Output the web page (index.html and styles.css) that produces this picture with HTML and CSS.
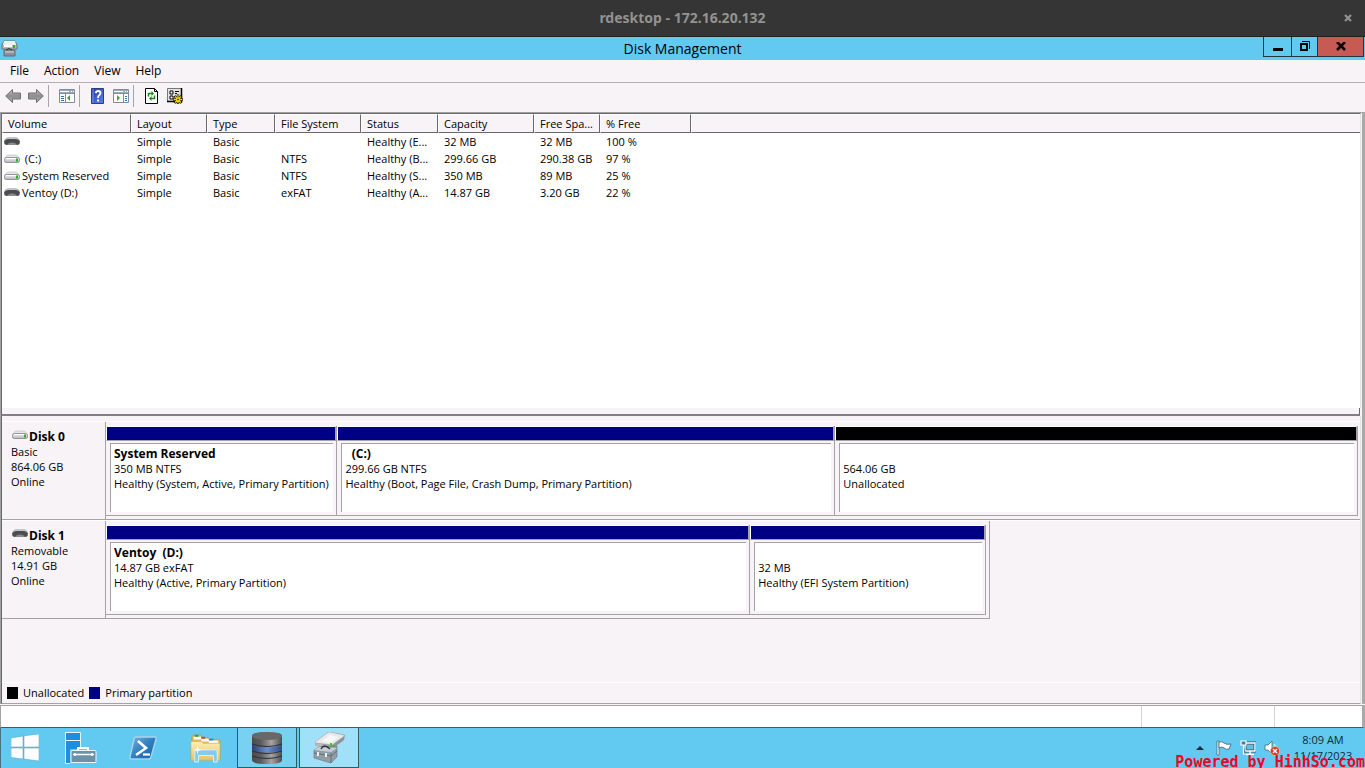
FILE: index.html
```html
<!DOCTYPE html>
<html lang="en">
<head>
<meta charset="utf-8">
<title>Disk Management</title>
<link rel="stylesheet" href="styles.css">
</head>
<body>
<svg class="defs" width="0" height="0" aria-hidden="true">
  <defs>
    <linearGradient id="metal" x1="0" y1="0" x2="0" y2="1"><stop offset="0" stop-color="#f4f4f6"/><stop offset="1" stop-color="#b4b4ba"/></linearGradient>
    <linearGradient id="arrow" x1="0" y1="0" x2="0" y2="1"><stop offset="0" stop-color="#c4c4c4"/><stop offset=".5" stop-color="#8c8c8c"/><stop offset="1" stop-color="#b4b4b4"/></linearGradient>
    <linearGradient id="psblue" x1="0" y1="0" x2="1" y2="1"><stop offset="0" stop-color="#7db4dc"/><stop offset=".5" stop-color="#2f7fbf"/><stop offset="1" stop-color="#1560a8"/></linearGradient>
    <linearGradient id="helpblue" x1="0" y1="0" x2="1" y2="1"><stop offset="0" stop-color="#2438a8"/><stop offset="1" stop-color="#5c86e8"/></linearGradient>
    <linearGradient id="folder" x1="0" y1="0" x2="0" y2="1"><stop offset="0" stop-color="#fdf0b4"/><stop offset="1" stop-color="#e9c368"/></linearGradient>
    <linearGradient id="cyl" x1="0" y1="0" x2="1" y2="0"><stop offset="0" stop-color="#4a4a4c"/><stop offset=".3" stop-color="#5c5c5f"/><stop offset=".65" stop-color="#a6a49f"/><stop offset="1" stop-color="#4c4c50"/></linearGradient>
    <linearGradient id="cylblue" x1="0" y1="0" x2="1" y2="0"><stop offset="0" stop-color="#26406e"/><stop offset=".5" stop-color="#6a8fd0"/><stop offset="1" stop-color="#2d4c86"/></linearGradient>
    <symbol id="hdd" viewBox="0 0 16 10">
      <path d="M3.500 1h9L15 4H1z" fill="#e6e6ea" stroke="#c6c6cc" stroke-width=".8"/>
      <rect x=".5" y="3.500" width="15" height="5" rx="1.800" fill="url(#metal)" stroke="#8c8c93" stroke-width=".9"/>
      <path d="M2 4.500h11" stroke="#fff"/>
      <rect x="12" y="4.500" width="2" height="3" fill="#25b025"/>
    </symbol>
    <symbol id="removable" viewBox="0 0 16 10">
      <path d="M0 4Q1 0 5 0h6q4 0 5 4z" fill="#c4c4c8"/>
      <path d="M0 4.500Q1 2 4 2h8q3 0 4 2.500L15.500 7q-1 1-2.500 1H3Q1.500 8 .5 7z" fill="#4b4d51"/>
      <path d="M3 8q1-2.500 5-2.500T13 8z" fill="#888b90"/>
    </symbol>
    <symbol id="diskmgr" viewBox="0 0 32 32">
      <path d="M2 11 14 1q1-1 3-1l15 3-1 5-12 9L2 13z" fill="#8f9296"/>
      <path d="M2 10 14 1q1-1 3-1l14 3q1 1-1 2L19 13 3 11z" fill="#e9e9eb" stroke="#a5a7aa" stroke-width=".6"/>
      <path d="m9 9 8-6 8 2-7 6z" fill="#f8f8f9"/>
      <path d="m2 11 17 3v4L3 14z" fill="#b7b9bd"/>
      <rect x="17" y="11" width="2" height="4" fill="#28d817"/>
      <path d="m1 18 5-3 18-1v11l-6 6L1 26z" fill="#929ea6" stroke="#68747c" stroke-width=".6"/>
      <path d="m1 18 5-3 18 1-6 4z" fill="#c4ced4"/>
      <path d="m1 21 17 3 6-5M18 21v10" fill="none" stroke="#65717a"/>
      <path d="M8 17q3-6 9 0" fill="none" stroke="#30363a" stroke-width="1.300"/>
      <path d="M5 20v4m8-3v4" stroke="#ecf1f4" stroke-width="2"/>
    </symbol>
  </defs>
</svg>

<header class="remote-bar">
  <span class="remote-title">rdesktop - 172.16.20.132</span>
  <button class="remote-close" aria-label="Close session"><svg width="8" height="8" viewBox="0 0 8 8"><path d="m1 1 6 6M7 1 1 7" stroke="#929292" stroke-width="2.200"/></svg></button>
</header>

<div class="title-bar">
  <svg class="title-icon" width="17" height="17" viewBox="0 0 17 17">
    <path d="M3 1h11l2 4v4H1V5z" fill="#b9babd" stroke="#707275"/><path d="M3 1h11l1 4H2z" fill="#eee"/><path d="M3 6h8" stroke="#fff" stroke-width="2"/><rect x="12" y="5" width="2" height="3" fill="#2ab41f"/>
    <path d="M3 10h11v6H3z" fill="#8b9297" stroke="#646c71"/><path d="M5 10q3-3 6 0" fill="none" stroke="#333"/><path d="M4 12h9" stroke="#d6dce0"/>
  </svg>
  <h1 class="title-text">Disk Management</h1>
  <div class="window-buttons">
    <button class="win-btn win-min" aria-label="Minimize"><svg width="10" height="10" viewBox="0 0 10 10"><path d="M0 7.500h10" stroke="#000" stroke-width="3"/></svg></button>
    <button class="win-btn win-restore" aria-label="Restore"><svg width="10" height="12" viewBox="0 0 10 12"><path d="M1 3h6v6H1z" fill="none" stroke="#000" stroke-width="2"/><path d="M2 .5h7.500V8" fill="none" stroke="#000"/></svg></button>
    <button class="win-btn win-close" aria-label="Close"><svg width="10" height="10" viewBox="0 0 10 10"><path d="M1 0 9 8M9 0 1 8" stroke="#000" stroke-width="2.600"/></svg></button>
  </div>
</div>

<nav class="menu-bar">
  <button class="menu-item">File</button><button class="menu-item">Action</button><button class="menu-item">View</button><button class="menu-item">Help</button>
</nav>

<div class="tool-bar">
  <button class="tool" aria-label="Back"><svg width="16" height="16" viewBox="0 0 16 16"><path d="M.7 8 7.500 1.500V5h8v6h-8v3.500z" fill="url(#arrow)" stroke="#6f6f6f"/></svg></button>
  <button class="tool" aria-label="Forward"><svg width="16" height="16" viewBox="0 0 16 16"><path d="M15.300 8 8.500 1.500V5h-8v6h8v3.500z" fill="url(#arrow)" stroke="#6f6f6f"/></svg></button>
  <span class="tool-sep"></span>
  <button class="tool" aria-label="Show console tree"><svg width="16" height="14" viewBox="0 0 16 14"><path d="M.5.5h15v13H.5z" fill="#fff" stroke="#7f8c9b"/><path d="M1 1h14v3H1z" fill="#9eabba"/><path d="M1 2.500h9M12 2.500h1m1 0h1" stroke="#fff"/><path d="M1 4.500h14M6.500 5v9" stroke="#7f8c9b"/><path d="M2 7.500h3m-3 2h3m-3 2h3" stroke="#3d6fb4"/><path d="M11 6v6L8 9z" fill="#3ba52f"/></svg></button>
  <span class="tool-sep"></span>
  <button class="tool" aria-label="Help"><svg width="14" height="16" viewBox="0 0 14 16"><path d="M.5.5h12v15H.5z" fill="url(#helpblue)" stroke="#2c3d86"/><path d="M2 1v14" stroke="#7e95da"/><path d="M4.800 5.200Q5 3 7.200 3t2.300 2q0 1.300-1.300 2.200T7 10" fill="none" stroke="#fff" stroke-width="1.800"/><rect x="6" y="11.500" width="2" height="2" fill="#fff"/></svg></button>
  <button class="tool" aria-label="Show action pane"><svg width="16" height="14" viewBox="0 0 16 14"><path d="M.5.5h15v13H.5z" fill="#fff" stroke="#7f8c9b"/><path d="M1 1h14v3H1z" fill="#9eabba"/><path d="M1 2.500h9M12 2.500h1m1 0h1" stroke="#fff"/><path d="M1 4.500h14M10.500 5v9" stroke="#7f8c9b"/><path d="M12 7.500h2m-2 2h2m-2 2h2" stroke="#3d6fb4"/><path d="M4 6v6l3-3z" fill="#3ba52f"/></svg></button>
  <span class="tool-sep"></span>
  <button class="tool" aria-label="Refresh"><svg width="14" height="16" viewBox="0 0 14 16"><path d="M.5.5h9l3 3v12H.5z" fill="#fff" stroke="#000"/><path d="M9.500.5v3h3" fill="none" stroke="#000"/><path d="M3.500 8.500V5.500H7M9.500 7.500v3H6" fill="none" stroke="#158c15" stroke-width="1.500"/><path d="M6.500 3v5l2.500-2.500zM6.500 8v5L4 10.500z" fill="#158c15"/></svg></button>
  <button class="tool" aria-label="Settings"><svg width="16" height="16" viewBox="0 0 16 16"><path d="M.5.500h14v13H.5z" fill="#e2e2e2" stroke="#777"/><path d="M14.500 0v13.500H0" fill="none" stroke="#000" stroke-width="1.500"/><path d="M3 3h3v3H3zm0 5h3v3H3z" fill="#fff" stroke="#000"/><path d="M8 3.500h4M8 5.500h2" stroke="#000"/><g stroke="#000" stroke-width="2.400"><path d="M11 6.500V16M6 11.500h10M7.500 8l7 7m0-7-7 7"/></g><g stroke="#f3d600" stroke-width="1.300"><path d="M11 7v8.500M6.500 11.500h9M8 8.500l6 6m0-6-6 6"/></g><circle cx="11" cy="11.500" r="2" fill="#f3d600"/><circle cx="11" cy="11.500" r=".8" fill="#000"/></svg></button>
</div>

<main class="workspace">
  <section class="volume-pane">
    <table class="volumes">
      <colgroup><col class="c-volume"><col class="c-layout"><col class="c-type"><col class="c-fs"><col class="c-status"><col class="c-capacity"><col class="c-free"><col class="c-percent"><col></colgroup>
      <thead><tr><th>Volume</th><th>Layout</th><th>Type</th><th>File System</th><th>Status</th><th>Capacity</th><th>Free Spa...</th><th>% Free</th><th></th></tr></thead>
      <tbody>
        <tr><td class="name"><svg class="drive"><use href="#removable"/></svg></td><td>Simple</td><td>Basic</td><td></td><td>Healthy (E...</td><td>32 MB</td><td>32 MB</td><td>100 %</td><td></td></tr>
        <tr><td class="name"><svg class="drive"><use href="#hdd"/></svg>&nbsp;(C:)</td><td>Simple</td><td>Basic</td><td>NTFS</td><td>Healthy (B...</td><td>299.66 GB</td><td>290.38 GB</td><td>97 %</td><td></td></tr>
        <tr><td class="name"><svg class="drive"><use href="#hdd"/></svg>System Reserved</td><td>Simple</td><td>Basic</td><td>NTFS</td><td>Healthy (S...</td><td>350 MB</td><td>89 MB</td><td>25 %</td><td></td></tr>
        <tr><td class="name"><svg class="drive"><use href="#removable"/></svg>Ventoy (D:)</td><td>Simple</td><td>Basic</td><td>exFAT</td><td>Healthy (A...</td><td>14.87 GB</td><td>3.20 GB</td><td>22 %</td><td></td></tr>
      </tbody>
    </table>
  </section>
  <div class="splitter"></div>

  <section class="disk-pane">
    <article class="disk">
      <div class="disk-label">
        <h2 class="disk-name"><svg class="drive"><use href="#hdd"/></svg>Disk 0</h2>
        <p>Basic</p><p>864.06 GB</p><p>Online</p>
      </div>
      <div class="disk-track full">
        <div class="part size-reserved"><div class="stripe"></div><div class="part-body"><h3>System Reserved</h3><p>350 MB NTFS</p><p>Healthy (System, Active, Primary Partition)</p></div></div>
        <div class="part size-c"><div class="stripe"></div><div class="part-body"><h3>&nbsp; (C:)</h3><p>299.66 GB NTFS</p><p>Healthy (Boot, Page File, Crash Dump, Primary Partition)</p></div></div>
        <div class="part size-free"><div class="stripe unallocated"></div><div class="part-body"><h3>&nbsp;</h3><p>564.06 GB</p><p>Unallocated</p></div></div>
      </div>
    </article>
    <article class="disk">
      <div class="disk-label">
        <h2 class="disk-name"><svg class="drive"><use href="#removable"/></svg>Disk 1</h2>
        <p>Removable</p><p>14.91 GB</p><p>Online</p>
      </div>
      <div class="disk-track short">
        <div class="part size-ventoy"><div class="stripe"></div><div class="part-body"><h3>Ventoy&nbsp; (D:)</h3><p>14.87 GB exFAT</p><p>Healthy (Active, Primary Partition)</p></div></div>
        <div class="part size-efi"><div class="stripe"></div><div class="part-body"><h3>&nbsp;</h3><p>32 MB</p><p>Healthy (EFI System Partition)</p></div></div>
      </div>
    </article>
    <div class="legend"><span class="swatch unallocated"></span>Unallocated<span class="swatch"></span>Primary partition</div>
  </section>
</main>

<div class="status-bar"><span class="status-main"></span><span class="status-cell wide"></span><span class="status-cell"></span></div>

<footer class="task-bar">
  <button class="task" aria-label="Start"><svg width="28" height="28" viewBox="0 0 28 28"><path d="m0 4 12-2v11H0zm13-2.200L28 0v13H13zM0 14h12v11L0 23.500zm13 0h15v13l-15-2z" fill="#fff" stroke="#479fbf" stroke-width=".5"/></svg></button>
  <button class="task" aria-label="Server Manager"><svg width="32" height="32" viewBox="0 0 32 32"><path d="M.5.5h15v31H.5z" fill="#1f8de0" stroke="#e8f6fc"/><path d="M1 8.500h14" stroke="#e8f6fc"/><path d="M5 17h27v15H5z" fill="#62caf0"/><path d="M13 19v-3h10v3" fill="none" stroke="#fff" stroke-width="2"/><path d="M6 19.500q0-1 1-1h23q1 0 1 1v11H6z" fill="#6e91aa" stroke="#e8f6fc"/><path d="M8 22.500h21M10 21v3m17-3v3" stroke="#fff" stroke-width="1.500"/></svg></button>
  <button class="task" aria-label="PowerShell"><svg width="28" height="24" viewBox="0 0 28 24"><path d="M6.500 1h19q2 0 1.500 2l-5 18q-.5 2-2.500 2h-17Q.5 23 1 21L5 3q.3-2 1.500-2z" fill="url(#psblue)" stroke="#a8d5ee" stroke-width="1.400"/><path d="m9 5 8 7-10 7" fill="none" stroke="#fff" stroke-width="2.600"/><path d="M14 18.500h7" stroke="#fff" stroke-width="2.200"/></svg></button>
  <button class="task" aria-label="File Explorer"><svg width="33" height="30" viewBox="0 0 33 32"><path d="M2 5q0-3 2-3h7l2 3h6l2 2h9q2 0 2 2v19H1z" fill="#e4ba60" stroke="#b88a37" stroke-width=".6"/><path d="M4 4h8v3H4zm8 2h9v3h-9zm8 2h10v3H20z" fill="#fff"/><path d="M5 2h4v2H5z" fill="#20a73a"/><path d="M12 4h4v2h-4z" fill="#c94331"/><path d="M20 6h5v2h-5z" fill="#2d86dc"/><path d="M1 9h11l2 2h18v18H1z" fill="url(#folder)" stroke="#d3a84f" stroke-width=".6"/><path d="M5 31V20q0-2 2-2h20q2 0 2 2v11h-4v-7H9v7z" fill="#86caec" stroke="#d8f2fc"/><path d="m8 13 1 4 4 1-4 1-1 4-1-4-4-1 4-1z" fill="#fff" opacity=".8"/></svg></button>
  <button class="task open" aria-label="Storage"><svg width="30" height="32" viewBox="0 0 30 32"><path d="M0 4q0-4 15-4t15 4v24q0 4-15 4T0 28z" fill="url(#cyl)"/><path d="M0 13q15 5 30 0v5q-15 5-30 0z" fill="url(#cylblue)"/><ellipse cx="15" cy="4" rx="15" ry="4" fill="#68686a"/><path d="M0 12q15 5 30 0M0 19q15 5 30 0M0 24q15 5 30 0" fill="none" stroke="#2a2f3c"/></svg></button>
  <button class="task open active" aria-label="Disk Management"><svg width="32" height="32"><use href="#diskmgr"/></svg></button>
  <div class="tray">
    <button class="tray-btn" aria-label="Show hidden icons"><svg width="8" height="4" viewBox="0 0 8 4"><path d="m0 4 4-4 4 4z" fill="#122a33"/></svg></button>
    <button class="tray-btn" aria-label="Action Center"><svg width="16" height="16" viewBox="0 0 16 16"><path d="M1 1h2v14H1z" fill="#fff" stroke="#37616f" stroke-width=".7"/><path d="M3 2q3-1 5 1t7 1l-2 5q-3 1-5-1T3 8z" fill="#fff" stroke="#37616f" stroke-width=".8"/></svg></button>
    <button class="tray-btn" aria-label="Network"><svg width="16" height="16" viewBox="0 0 16 16"><path d="M5 3h10v8H5z" fill="#65bedf" stroke="#315966" stroke-width="3"/><path d="M5 3h10v8H5zM10 11v3M6 14.500h8" fill="none" stroke="#fff" stroke-width="1.400"/><path d="M1 1h5v4H1zM3.500 5v9H6" fill="#477f91" stroke="#fff" stroke-width="1.200"/></svg></button>
    <button class="tray-btn" aria-label="Volume muted"><svg width="16" height="16" viewBox="0 0 16 16"><path d="M1 5h3l4-4v13l-4-4H1z" fill="#fff" stroke="#466774" stroke-width=".8"/><path d="M10 4q2 2 1 4" fill="none" stroke="#fff"/><circle cx="11" cy="11" r="4.600" fill="#d63b28" stroke="#f2c3bb" stroke-width=".7"/><path d="m9 9 4 4m0-4-4 4" stroke="#fff" stroke-width="1.400"/></svg></button>
    <div class="clock"><time>8:09 AM</time><time>11/17/2023</time></div>
  </div>
  <span class="watermark">Powered by HinhSo.com</span>
</footer>
</body>
</html>
```
FILE: styles.css
```css
* { box-sizing: border-box; }

html, body { height: 100%; }

body {
  margin: 0;
  min-width: 1000px;
  display: flex;
  flex-direction: column;
  overflow: hidden;
  background: #f7f3f7;
  color: #000;
  font: 11px/15px "Open Sans", "Noto Sans", sans-serif;
}

h1, h2, h3, p { margin: 0; font-size: inherit; font-weight: inherit; }

button {
  margin: 0;
  padding: 0;
  border: 0;
  background: none;
  color: inherit;
  font: inherit;
}

svg { display: block; flex: none; }

.defs { position: absolute; }

/* Window chrome */
.remote-bar {
  flex: none;
  height: 37px;
  display: grid;
  grid-template-columns: 34px 1fr 34px;
  align-items: center;
  justify-items: center;
  border-bottom: 1px solid #202020;
  background: #353535;
  color: #929292;
}

.remote-title {
  grid-column: 2;
  font: bold 14px/20px "Noto Sans", sans-serif;
}

.remote-close { padding: 4px; }

.title-bar {
  flex: none;
  height: 23px;
  display: grid;
  grid-template-columns: 102px 1fr 102px;
  background: #62caf0;
}

.title-icon { margin: 3px 1px; }

.title-text {
  text-align: center;
  font-size: 14px;
  line-height: 23px;
}

.window-buttons {
  height: 20px;
  display: flex;
  margin-right: 1px;
  border: 1px solid #24363d;
  border-top: 0;
}

.win-btn {
  display: flex;
  align-items: center;
  justify-content: center;
}

.win-min { flex: 28; border-right: 1px solid #24363d; }
.win-restore { flex: 26; border-right: 1px solid #24363d; }
.win-close { flex: 46; background: #c75a52; }

.menu-bar {
  flex: none;
  height: 23px;
  display: flex;
  gap: 15px;
  padding: 0 0 2px 10px;
  border-bottom: 1px solid #b3b1b3;
  font-size: 12px;
}

.tool-bar {
  flex: none;
  height: 29px;
  display: flex;
  align-items: center;
  gap: 7px;
  padding: 0 5px 4px;
}

.tool {
  width: 16px;
  display: flex;
  justify-content: center;
}

.tool-sep {
  width: 1px;
  height: 22px;
  margin-left: -3px;
  background: #a7a5a7;
}

.tool-sep + .tool { margin-left: 3px; }

/* Main panes */
.workspace {
  flex: 1;
  min-height: 0;
  display: flex;
  flex-direction: column;
  border-top: 1px solid #a0a0a0;
  border-left: 1px solid #a0a0a0;
  border-right: 3px solid #a9a9a9;
}

.volume-pane {
  flex: 1;
  min-height: 0;
  overflow: hidden;
  margin-right: 1px;
  border-top: 1px solid #696969;
  border-left: 1px solid #696969;
  border-right: 1px solid #e3e3e3;
  background: #fff;
}

.volumes {
  width: 100%;
  table-layout: fixed;
  border-collapse: separate;
  border-spacing: 0;
}

.c-volume { width: 129px; }
.c-layout { width: 76px; }
.c-type { width: 68px; }
.c-fs { width: 86px; }
.c-status { width: 77px; }
.c-capacity { width: 96px; }
.c-free { width: 66px; }
.c-percent { width: 91px; }

.volumes th {
  height: 19px;
  padding: 0 0 0 5px;
  border-top: 1px solid #fff;
  border-left: 1px solid #fff;
  border-right: 1px solid #696969;
  border-bottom: 1px solid #696969;
  background: #f7f3f7;
  text-align: left;
  font-weight: normal;
  line-height: 17px;
  white-space: nowrap;
}

.volumes th:last-child { border-right: 0; }

.volumes td {
  height: 17px;
  padding: 0 0 0 6px;
  line-height: 17px;
  white-space: nowrap;
}

.volumes td.name { padding-left: 2px; }

.drive { width: 16px; height: 10px; }

.name .drive {
  display: inline-block;
  margin-right: 2px;
  vertical-align: -1px;
}

.splitter {
  flex: none;
  height: 8px;
  margin-right: 2px;
  border-left: 1px solid #696969;
  border-right: 1px solid #696969;
  border-bottom: 2px solid #808080;
  background: #f7f3f7;
}

.disk-pane {
  flex: none;
  min-height: 288px;
  display: flex;
  flex-direction: column;
  margin-right: 1px;
  padding-top: 5px;
  border-left: 1px solid #696969;
  border-right: 1px solid #e3e3e3;
  border-bottom: 1px solid #a5a2a5;
}

.disk {
  height: 99px;
  display: flex;
  border-top: 1px solid #fff;
}

.disk-label {
  flex: none;
  width: 104px;
  padding: 7px 0 0 9px;
  border-right: 1px solid #a5a2a5;
  border-bottom: 1px solid #a5a2a5;
}

.disk-name {
  display: flex;
  font-size: 12px;
  font-weight: bold;
}

.disk-name .drive { margin: 1px 1px 0; }

.disk-track {
  display: flex;
  padding: 4px 3px 3px 0;
  border-bottom: 1px solid #a5a2a5;
}

.full { flex: 1; padding-right: 2px; }
.short { width: calc(70% - 67px); border-right: 1px solid #a5a2a5; }

.part {
  min-width: 0;
  display: flex;
  flex-direction: column;
  border-right: 1px solid #a5a2a5;
  border-bottom: 1px solid #a5a2a5;
}

.size-reserved { flex: 231 1 0; }
.size-c { flex: 498 1 0; }
.size-free { flex: 523 1 0; }
.size-ventoy { flex: 645 1 0; }
.size-efi { flex: 235 1 0; }

.stripe {
  height: 15px;
  border-top: 1px solid #fff;
  border-left: 1px solid #fff;
  border-right: 1px solid #a5a2a5;
  border-bottom: 1px solid #a5a2a5;
  background: #000084;
}

.stripe.unallocated { background: #000; }

.part-body {
  flex: 1;
  margin: 2px 3px 3px 4px;
  padding: 2px 3px 0;
  border-top: 1px solid #a5a2a5;
  border-left: 1px solid #a5a2a5;
  background: #fff;
  white-space: nowrap;
}

.part-body h3, .part-body p { overflow: hidden; }
.part-body h3 { font-size: 12px; font-weight: bold; }

.legend {
  display: flex;
  align-items: center;
  height: 20px;
  margin: auto 0 1px;
  padding-left: 5px;
  border-top: 1px solid #fff;
}

.swatch {
  width: 11px;
  height: 12px;
  margin: 0 5px;
  background: #000084;
}

.swatch.unallocated { margin-left: 0; background: #000; }

.status-bar {
  flex: none;
  height: 23px;
  display: flex;
  margin-top: 1px;
  border-top: 1px solid #a5a2a5;
  border-left: 1px solid #a5a2a5;
  border-right: 3px solid #a9a9a9;
  border-bottom: 1px solid #555;
  background: #fff;
}

.status-main { flex: 1; }

.status-cell {
  width: 88px;
  border-left: 1px solid #d6d3d6;
}

.status-cell.wide { width: 133px; }

/* Task bar */
.task-bar {
  position: relative;
  flex: none;
  height: 40px;
  display: flex;
  gap: 2px;
  border-left: 1px solid #47717f;
  background: #62caf0;
}

.task {
  width: 60px;
  display: flex;
  align-items: center;
  justify-content: center;
}

.task:first-child { width: 48px; }

.task.open {
  border: 1px solid #2f5a68;
  border-top: 0;
  background: #78d1f1;
}

.task.active { background: #a0e0f8; }

.tray {
  display: flex;
  align-items: center;
  gap: 8px;
  margin-left: auto;
  padding-right: 7px;
}

.tray-btn:first-child { margin-right: 4px; }

.clock {
  width: 70px;
  display: flex;
  flex-direction: column;
  align-items: center;
  line-height: 16px;
  color: #0e2b36;
}

.watermark {
  position: absolute;
  right: 0;
  bottom: -2px;
  color: #f50022;
  font: bold 15px/16px "DejaVu Sans Mono", monospace;
}
```
